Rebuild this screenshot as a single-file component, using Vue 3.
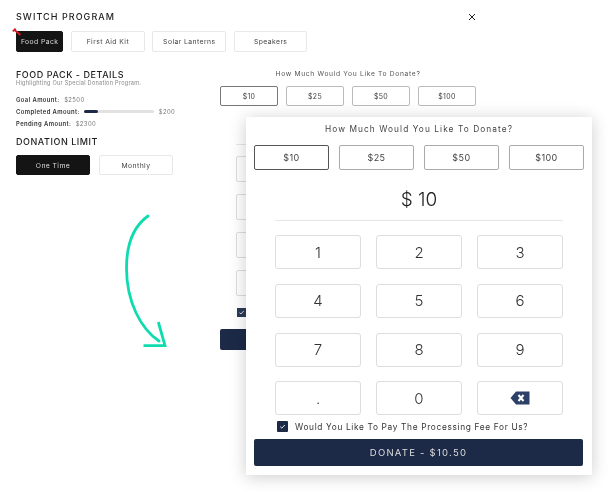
<script setup>
const tabs = ['Food Pack', 'First Aid Kit', 'Solar Lanterns', 'Speakers']
const amounts = ['$10', '$25', '$50', '$100']
const keys = ['1', '2', '3', '4', '5', '6', '7', '8', '9', '.', '0']
const question = 'How Much Would You Like To Donate?'
</script>

<template>
  <div class="page">
    <header class="top">
      <h1>SWITCH PROGRAM</h1>
      <svg class="close" width="8" height="8" viewBox="0 0 8 8">
        <path d="M1 1l6 6M7 1L1 7" stroke="#222" stroke-width="1" fill="none" />
      </svg>
    </header>

    <div class="tabs">
      <button v-for="(t, i) in tabs" :key="t" class="tab" :class="{ dark: i === 0 }">{{ t }}</button>
    </div>

    <div class="columns">
      <section class="details">
        <h2>FOOD PACK - DETAILS</h2>
        <p class="sub">Highlighting Our Special Donation Program.</p>
        <div class="stat"><b>Goal Amount:</b> <span>$2500</span></div>
        <div class="stat">
          <b>Completed Amount:</b>
          <i class="track"><i class="fill"></i></i>
          <span>$200</span>
        </div>
        <div class="stat"><b>Pending Amount:</b> <span>$2300</span></div>
        <h2 class="limit">DONATION LIMIT</h2>
        <div class="limit-btns">
          <button class="tab dark wide">One Time</button>
          <button class="tab wide">Monthly</button>
        </div>
      </section>

      <section class="back-form">
        <p class="back-q">{{ question }}</p>
        <div class="back-amounts">
          <button v-for="(a, i) in amounts" :key="a" class="back-amt" :class="{ on: i === 0 }">{{ a }}</button>
        </div>
        <div class="back-rule"></div>
        <div class="back-keys">
          <span v-for="n in 12" :key="n" class="back-key"></span>
        </div>
        <span class="back-check">
          <svg width="9" height="9" viewBox="0 0 9 9"><path d="M2.500 4.600l1.400 1.400 2.800-3" stroke="#fff" stroke-width=".8" fill="none" /></svg>
        </span>
        <div class="back-donate"></div>
      </section>
    </div>

    <!-- red pin on the first tab -->
    <svg class="pin" width="10" height="9" viewBox="0 0 10 9">
      <path d="M2.500 2l6 5" stroke="#d8141c" stroke-width="1.800" fill="none" />
      <path d="M.8 3.400L3.600 .6" stroke="#d8141c" stroke-width="1.800" fill="none" />
    </svg>

    <svg class="arrow" width="50" height="140" viewBox="120 212 50 140">
      <path d="M148 216C134 226 126.500 244 126.500 268C126.500 302 141 329 159 341" stroke="#0fdcae" stroke-width="2.800" fill="none" stroke-linecap="round" />
      <path d="M158.300 322L165 345.700L143.500 345.700" stroke="#0fdcae" stroke-width="2.800" fill="none" />
    </svg>

    <section class="popup">
      <p class="q">{{ question }}</p>
      <div class="amounts">
        <button v-for="(a, i) in amounts" :key="a" class="amt" :class="{ on: i === 0 }">{{ a }}</button>
      </div>
      <div class="value">$ 10</div>
      <div class="pad">
        <button v-for="k in keys" :key="k" class="key">{{ k }}</button>
        <button class="key">
          <svg width="20" height="14" viewBox="0 0 20 14">
            <path d="M6 .5H19.500V13.500H6L.5 7z" fill="#2c4068" />
            <path d="M8.500 4l5 6M13.500 4l-5 6" stroke="#fff" stroke-width="2" fill="none" />
          </svg>
        </button>
      </div>
      <label class="fee">
        <span class="check">
          <svg width="11" height="11" viewBox="0 0 11 11"><path d="M3.200 5.600l1.600 1.600 3-3.200" stroke="#fff" stroke-width=".9" fill="none" /></svg>
        </span>
        Would You Like To Pay The Processing Fee For Us?
      </label>
      <button class="donate">DONATE - $10.50</button>
    </section>
  </div>
</template>

<style>
html,
body {
  background: #fff;
}
</style>

<style scoped>
.page {
  position: relative;
  width: 608px;
  height: 492px;
  overflow: hidden;
  box-sizing: border-box;
  padding: 12px 0 0 16px;
  background: #fff;
  color: #222;
  font-family: Inter, "Liberation Sans", sans-serif;
  /* the reference is a scaled-down capture, so its text is soft and grey */
  filter: blur(0.3px);
}

button {
  font-family: inherit;
  padding: 0;
  margin: 0;
  background: #fff;
  cursor: pointer;
}

h1,
h2,
p {
  margin: 0;
  font-weight: 400;
}

.top {
  display: flex;
  align-items: center;
  justify-content: space-between;
  width: 460px;
  height: 10px;
}

h1 {
  font-size: 9px;
  font-weight: 500;
  line-height: 10px;
  letter-spacing: 1.05px;
  color: #1d1d1d;
}

.tabs {
  display: flex;
  gap: 7.800px;
  margin-top: 9px;
}

.tab {
  width: 73.600px;
  height: 21px;
  border: 1px solid #e8e8e8;
  border-radius: 2px;
  font-size: 6.800px;
  letter-spacing: 0.42px;
  color: #444;
}

.tab:first-child {
  width: 47.300px;
}

.tab.dark {
  background: #141414;
  border-color: #141414;
  color: #ddd;
}

.columns {
  display: flex;
  margin-top: 17px;
}

.details {
  width: 204px;
}

h2 {
  font-size: 9px;
  font-weight: 500;
  line-height: 11px;
  letter-spacing: 0.55px;
  color: #1d1d1d;
}

.sub {
  font-size: 5.600px;
  line-height: 7px;
  letter-spacing: 0.25px;
  color: #888;
  margin-bottom: 6px;
}

.stat {
  display: flex;
  align-items: center;
  gap: 4.500px;
  height: 12px;
  font-size: 5.900px;
  letter-spacing: 0.4px;
  color: #777;
}

.stat b {
  font-weight: 600;
  color: #333;
}

.track {
  display: block;
  width: 70px;
  height: 3px;
  border-radius: 2px;
  background: #e2e2e2;
}

.fill {
  display: block;
  width: 14px;
  height: 3px;
  border-radius: 2px;
  background: #1c2a48;
}

.limit {
  margin-top: 7px;
}

.limit-btns {
  display: flex;
  gap: 9px;
  margin-top: 8px;
}

.tab.wide,
.tab.wide:first-child {
  width: 74px;
  height: 20px;
}

.back-form {
  width: 256px;
}

.back-q {
  font-size: 6.700px;
  line-height: 10px;
  letter-spacing: 0.68px;
  color: #555;
  text-align: center;
}

.back-amounts {
  display: flex;
  gap: 8px;
  margin-top: 7px;
}

.back-amt {
  width: 58px;
  height: 20px;
  border: 1px solid #bbb;
  border-radius: 2px;
  font-size: 7px;
  letter-spacing: 0.3px;
  color: #444;
}

.back-amt.on {
  border-color: #777;
}

.back-rule {
  width: 226px;
  height: 1px;
  margin: 38px 0 0 16px;
  background: #e6e6e6;
}

.back-keys {
  display: grid;
  grid-template-columns: repeat(3, 64px);
  grid-auto-rows: 26px;
  gap: 12px 17px;
  margin: 11px 0 0 16px;
}

.back-key {
  border: 1px solid #ddd;
  border-radius: 2px;
}

.back-check {
  display: block;
  width: 9px;
  height: 9px;
  margin: 12px 0 0 17px;
  background: #2c3a58;
}

.back-check svg {
  display: block;
}

.back-donate {
  width: 256px;
  height: 21px;
  margin-top: 12px;
  border-radius: 2px;
  background: #1c2a48;
}

.pin {
  position: absolute;
  left: 12px;
  top: 28px;
}

.arrow {
  position: absolute;
  left: 120px;
  top: 212px;
}

/* the enlarged card that lies over the form */
.popup {
  position: absolute;
  left: 246px;
  top: 117px;
  width: 346px;
  height: 358px;
  box-sizing: border-box;
  padding: 7px 8px 0;
  background: #fff;
  box-shadow: 0 2px 16px rgba(0, 0, 0, 0.2);
}

.q {
  font-size: 8.300px;
  line-height: 11px;
  letter-spacing: 1.08px;
  color: #444;
  text-align: center;
}

.amounts {
  display: grid;
  grid-template-columns: repeat(4, 74.300px);
  gap: 10.700px;
  margin: 10px 0 0 0.3px;
}

.amt {
  height: 25px;
  border: 1px solid #aaa;
  border-radius: 2px;
  font-size: 9px;
  letter-spacing: 0.4px;
  color: #444;
}

.amt.on {
  border-color: #555;
}

.value {
  height: 51px;
  box-sizing: border-box;
  padding-top: 8px;
  display: flex;
  align-items: center;
  justify-content: center;
  margin: 0 21px;
  border-bottom: 1px solid #e6e6e6;
  font-size: 19px;
  font-weight: 300;
  color: #222;
}

.pad {
  display: grid;
  grid-template-columns: repeat(3, 86px);
  grid-auto-rows: 34px;
  gap: 14.700px 15px;
  margin: 14.300px 21px 0;
}

.key {
  display: flex;
  align-items: center;
  justify-content: center;
  border: 1px solid #ddd;
  border-radius: 3px;
  font-size: 15px;
  font-weight: 300;
  color: #333;
}

.fee {
  display: flex;
  align-items: center;
  gap: 7px;
  margin: 5.500px 0 0 23px;
  height: 12px;
  font-size: 8.300px;
  letter-spacing: 0.67px;
  color: #333;
}

.check {
  display: block;
  width: 11px;
  height: 11px;
  border-radius: 1px;
  background: #1c2a48;
}

.check svg {
  display: block;
}

.donate {
  display: block;
  width: 329px;
  height: 27px;
  margin-top: 6px;
  border: 0;
  border-radius: 2px;
  background: #1c2a48;
  color: #ddd;
  font-size: 9.500px;
  letter-spacing: 1.250px;
}
</style>
